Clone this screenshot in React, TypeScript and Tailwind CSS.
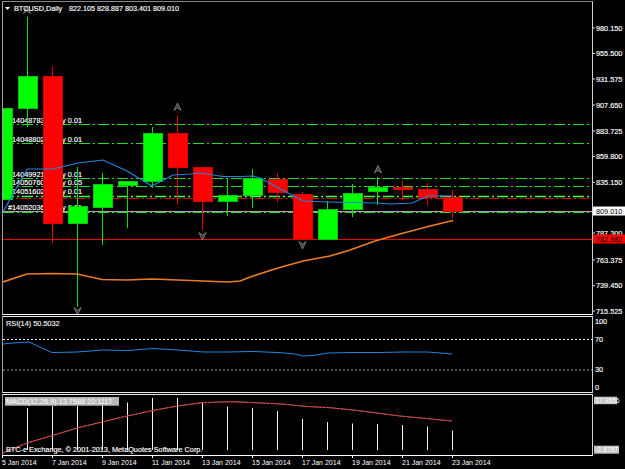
const candles = [
  { x: 2.5, open: 200, close: 108, high: 108, low: 200 },
  { x: 27.5, open: 109, close: 76, high: 17, low: 127 },
  { x: 52.5, open: 76, close: 224, high: 66, low: 243 },
  { x: 77.5, open: 224, close: 206, high: 167, low: 307 },
  { x: 102.5, open: 208, close: 184, high: 173, low: 245 },
  { x: 127.5, open: 186, close: 181, high: 181, low: 228 },
  { x: 152.5, open: 182, close: 133, high: 127, low: 188 },
  { x: 177.5, open: 133, close: 168, high: 115, low: 205 },
  { x: 202.5, open: 167, close: 202, high: 167, low: 230 },
  { x: 227.5, open: 202, close: 195, high: 178, low: 216 },
  { x: 252.5, open: 196, close: 178, high: 169, low: 208 },
  { x: 277.5, open: 179, close: 193, high: 173, low: 202 },
  { x: 302.5, open: 194, close: 240, high: 192, low: 240 },
  { x: 327.5, open: 240, close: 209, high: 201, low: 240 },
  { x: 352.5, open: 210, close: 193, high: 184, low: 217 },
  { x: 377.5, open: 192, close: 187, high: 177, low: 205 },
  { x: 402.5, open: 187, close: 190, high: 181, low: 200 },
  { x: 427.5, open: 189, close: 198, high: 183, low: 206 },
  { x: 452.5, open: 197, close: 212, high: 190, low: 218 },
];

const blueLine =
  '3,212 27,169 53,169 78,163 103,160 127,171 152,186 173,175 190,174 200,173 223,176.5 240,176.5 253,176 260,178 303,201 328,202 378,203 390,204 412,203 428,196 453,196';
const orangeLine =
  '3,282 27,274 52,273.5 77,274 102,279.5 127,280 152,279 178,280 203,281 228,282 240,281 253,276 278,268 303,261 330,256 350,250 375,241 400,234 430,226 453,220.5';
const rsiLine =
  '3,344 13,343 29,342 52,352.5 77,352 103,350 128,350.5 153,348.5 178,350 203,352 228,352 253,351.5 278,352.5 295,354 303,356 313,355.5 328,353 353,352.5 378,352.5 403,352 428,352 452,354';
const signalLine =
  '3,453 27,443 52,435.7 77,428 102,422 127,416 152,410.7 177,406 202,402.7 230,401.7 240,402 282,404 307,406.5 330,407.7 353,410 377,413 400,416 428,418.7 452,421';

const histogram = [
  [2.5, 414], [27.5, 408], [52.5, 406], [77.5, 406], [102.5, 405], [127.5, 402.5], [152.5, 398],
  [177.5, 398], [202.5, 402.5], [227.5, 406.5], [252.5, 408], [277.5, 411], [302.5, 419],
  [327.5, 422], [352.5, 423.5], [377.5, 424], [402.5, 425], [427.5, 426.5], [452.5, 430.5],
];

const tradeLines = [
  { y: 124.5, id: '#14048783', lot: 'buy 0.01', baseline: 123 },
  { y: 143.5, id: '#14048802', lot: 'buy 0.01', baseline: 142 },
  { y: 178.5, id: '#14049921', lot: 'buy 0.01', baseline: 177 },
  { y: 186.5, id: '#14050760', lot: 'buy 0.05', baseline: 184.5 },
  { y: 196.5, id: '#14051602', lot: 'buy 0.01', baseline: 194 },
  { y: 212.5, id: '#14052036', lot: 'buy 0.01', baseline: 210 },
];

const axisLabels = [
  { y: 28, text: '980.150' },
  { y: 53.5, text: '955.500' },
  { y: 79, text: '931.575' },
  { y: 105, text: '907.650' },
  { y: 131, text: '883.725' },
  { y: 156.7, text: '859.800' },
  { y: 182.3, text: '835.150' },
  { y: 233, text: '787.300' },
  { y: 260, text: '763.375' },
  { y: 285.7, text: '739.450' },
  { y: 311, text: '715.525' },
];

const dates = ['5 Jan 2014', '7 Jan 2014', '9 Jan 2014', '11 Jan 2014', '13 Jan 2014', '15 Jan 2014', '17 Jan 2014', '19 Jan 2014', '21 Jan 2014', '23 Jan 2014'];

const Arrow = ({ x, y, down }: { x: number; y: number; down?: boolean }) => (
  <path
    d="M0,-4 L3.6,3.5 L0,0.8 L-3.6,3.5 Z"
    transform={`translate(${x} ${y})${down ? ' scale(1 -1)' : ''}`}
    fill="#3c3c3c"
    stroke="#8c8c8c"
    strokeWidth="0.8"
  />
);

const MainChart = () => (
  <svg width="589" height="312" viewBox="3 2 589 312" className="block">
    <line x1="3" x2="592" y1="239.5" y2="239.5" stroke="#f00000" />
    <line x1="3" x2="592" y1="211.5" y2="211.5" stroke="#a8a8a8" />
    <line x1="3" x2="592" y1="198.5" y2="198.5" stroke="#e00000" strokeDasharray="10 3 2 3" />
    {tradeLines.map((line) => (
      <line
        key={line.y}
        x1="3"
        x2="592"
        y1={line.y}
        y2={line.y}
        stroke={line.y === 196.5 ? '#44ff44' : '#22dd22'}
        strokeWidth={line.y === 196.5 ? 1.4 : 1}
        strokeDasharray="11 3 2 3"
      />
    ))}
    {tradeLines.map((line) => (
      <text key={line.id} x="8" y={line.baseline} className="fill-white stroke-white stroke-[0.15px] text-[7.3px]">
        {line.id}
        <tspan x="54">{line.lot}</tspan>
      </text>
    ))}
    {candles.map((c) => {
      const up = c.close < c.open;
      return (
        <g key={c.x}>
          <line x1={c.x} x2={c.x} y1={c.high} y2={c.low} stroke={up ? '#00e800' : '#f00000'} />
          <rect
            x={c.x - 9}
            y={Math.min(c.open, c.close) + 0.5}
            width="19"
            height={Math.abs(c.close - c.open) - 1}
            fill={up ? '#00ff00' : '#ff0000'}
            stroke={up ? '#00c800' : '#d80000'}
          />
        </g>
      );
    })}
    <polyline points={orangeLine} fill="none" stroke="#ec7c22" strokeWidth="1.7" />
    <polyline points={blueLine} fill="none" stroke="#1e88e0" strokeWidth="1.1" />
    <Arrow x={27} y={10} />
    <Arrow x={177.5} y={107} />
    <Arrow x={378} y={169.5} />
    <Arrow x={77.5} y={311} down />
    <Arrow x={202.5} y={236} down />
    <Arrow x={302.5} y={245} down />
    <path d="M5,7 L10,7 L7.5,10 Z" fill="#fff" />
    <text x="14" y="11" className="fill-white stroke-white stroke-[0.15px] text-[7.3px]">BTCUSD,Daily</text>
    <text x="69" y="11" className="fill-white stroke-white stroke-[0.15px] text-[7.2px]">822.105 828.887 803.401 809.010</text>
  </svg>
);

const MainAxis = () => (
  <svg width="32" height="314" viewBox="593 1 32 314" className="block">
    {axisLabels.map((label) => (
      <g key={label.text}>
        <line x1="593" x2="595" y1={label.y} y2={label.y} stroke="#ddd" />
        <text x="596" y={label.y + 2.6} className="fill-white stroke-white stroke-[0.15px] text-[7.3px]">{label.text}</text>
      </g>
    ))}
    <rect x="593" y="206.5" width="32" height="9" fill="#fff" />
    <text x="596" y="213.6" className="fill-black text-[7.3px]">809.010</text>
    <rect x="593" y="234.5" width="32" height="9" fill="#ff0000" />
    <text x="596" y="241.7" className="fill-black text-[7.3px]">782.982</text>
  </svg>
);

const RsiChart = () => (
  <svg width="589" height="75" viewBox="3 317 589 75" className="block">
    <line x1="3" x2="592" y1="339.5" y2="339.5" stroke="#eee" strokeDasharray="2 2" />
    <line x1="3" x2="592" y1="370" y2="370" stroke="#999" strokeDasharray="2 2" />
    <polyline points={rsiLine} fill="none" stroke="#1e88e0" />
    <text x="6" y="325.5" className="fill-[#e8e8e8] stroke-white stroke-[0.15px] text-[7.3px]">RSI(14) 50.5032</text>
  </svg>
);

const RsiAxis = () => (
  <svg width="32" height="77" viewBox="593 316 32 77" className="block">
    {[
      { y: 321.7, text: '100' },
      { y: 339.3, text: '70' },
      { y: 369.5, text: '30' },
      { y: 387, text: '0' },
    ].map((label) => (
      <text key={label.text} x="595" y={label.y + 2.6} className="fill-white stroke-white stroke-[0.15px] text-[7.3px]">{label.text}</text>
    ))}
  </svg>
);

const MacdChart = () => (
  <svg width="589" height="60" viewBox="3 395 589 60" className="block">
    {histogram.map(([x, top]) => (
      <line key={x} x1={x} x2={x} y1={top} y2="450" stroke="#f4f4f4" />
    ))}
    <polyline points={signalLine} fill="none" stroke="#a89090" />
    <polyline points={signalLine} fill="none" stroke="#e80000" strokeDasharray="2 1.5" />
    <rect x="5" y="397" width="114" height="8.7" fill="#b8b8b8" />
    <text x="6" y="403.8" className="fill-white text-[7.3px]">MACD(12,26,9) 13.7588 20.1117</text>
    <text x="6" y="451.8" className="fill-white stroke-white stroke-[0.15px] text-[7.3px]">BTC-e Exchange, © 2001-2013, MetaQuotes Software Corp.</text>
  </svg>
);

const MacdAxis = () => (
  <svg width="32" height="62" viewBox="593 394 32 62" className="block">
    <rect x="594" y="396.7" width="23" height="7.5" fill="#c4c4c4" />
    <text x="595" y="403" className="fill-white text-[6.8px]">37.9556</text>
    <rect x="594" y="445.7" width="25" height="8" fill="#c4c4c4" />
    <text x="595" y="452.2" className="fill-white text-[6.8px]">-2.8757</text>
  </svg>
);

const App = () => {
  return (
    <div className="w-[625px] h-[469px] bg-black overflow-hidden pt-px font-['Liberation_Sans',Arial,sans-serif] text-white">
      <div className="flex h-[314px]">
        <div className="ml-[2px] w-[591px] border border-t-[#8a8a8a] border-l-[#a0a0a0] border-r-[#d0d0d0] border-b-white">
          <MainChart />
        </div>
        <MainAxis />
      </div>
      <div className="flex h-[77px] mt-px">
        <div className="ml-[2px] w-[591px] border border-t-[#e8e8e8] border-l-[#a0a0a0] border-r-[#d0d0d0] border-b-[#e8e8e8]">
          <RsiChart />
        </div>
        <RsiAxis />
      </div>
      <div className="flex h-[62px] mt-px">
        <div className="ml-[2px] w-[591px] border border-t-[#e8e8e8] border-l-[#a0a0a0] border-r-[#d0d0d0] border-b-white">
          <MacdChart />
        </div>
        <MacdAxis />
      </div>
      <div className="flex pl-[2px]">
        {dates.map((date) => (
          <div key={date} className="w-[50px]">
            <div className="w-px h-[2px] bg-white" />
            <div className="text-[7px] leading-[9px] whitespace-nowrap">{date}</div>
          </div>
        ))}
      </div>
    </div>
  );
};

export default App;
